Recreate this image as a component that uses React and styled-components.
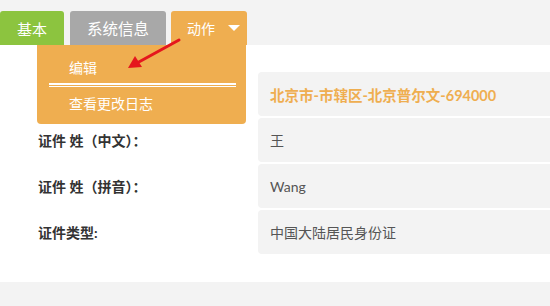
import React from 'react'
import styled, { createGlobalStyle } from 'styled-components'

const GlobalStyle = createGlobalStyle`
    html, body {
        margin: 0;
        padding: 0;
        background: #f3f3f3;
        font-family: "Lato", "Noto Sans CJK SC", sans-serif;
    }
`

const rows = [
    { label: '', value: '北京市-市辖区-北京普尔文-694000', highlight: true },
    { label: '证件 姓（中文）：', value: '王' },
    { label: '证件 姓（拼音）：', value: 'Wang' },
    { label: '证件类型:', value: '中国大陆居民身份证' },
]

const App = () => {
    return (
        <Page>
            <GlobalStyle />
            <TabBar>
                <Tab color="#8cc43f" pad="17px">基本</Tab>
                <Tab color="#a8a8a8" pad="17px" size="15.5px">系统信息</Tab>
                <ActionTab>
                    <span>动作</span>
                    <Caret />
                    <Dropdown>
                        <MenuItem>编辑</MenuItem>
                        <Divider />
                        <MenuItem>查看更改日志</MenuItem>
                    </Dropdown>
                </ActionTab>
            </TabBar>
            <Panel>
                {rows.map((row, i) => (
                    <Row key={i}>
                        <Label>{row.label}</Label>
                        <Value highlight={row.highlight}>{row.value}</Value>
                    </Row>
                ))}
            </Panel>
            <Arrow viewBox="0 0 60 34" width="60" height="34">
                <line x1="54" y1="3" x2="12" y2="26" stroke="#e5161d" strokeWidth="3" strokeLinecap="round" />
                <polygon points="3,31 10,19 17,30" fill="#e5161d" />
            </Arrow>
        </Page>
    )
}

export default App

const Page = styled.div`
    position: relative;
    width: 550px;
    height: 306px;
    overflow: hidden;
    background: #f3f3f3;
`

const TabBar = styled.nav`
    display: flex;
    align-items: flex-end;
    gap: 6px;
    height: 45px;
    box-sizing: border-box;
    padding-top: 11px;
`

const Tab = styled.div`
    height: 34px;
    display: flex;
    align-items: center;
    padding: 0 ${p => p.pad || '17px'};
    background: ${p => p.color};
    color: #fff;
    font-size: ${p => p.size || '15px'};
    border-radius: 3px 3px 0 0;
`

const ActionTab = styled.div`
    position: relative;
    height: 34px;
    display: flex;
    align-items: center;
    margin-left: -1px;
    padding: 0 7px 0 16px;
    gap: 13px;
    background: #efae50;
    color: #fff;
    font-size: 14px;
    border-radius: 3px 3px 0 0;
`

const Caret = styled.i`
    width: 0;
    height: 0;
    border-left: 6px solid transparent;
    border-right: 6px solid transparent;
    border-top: 6px solid #fff;
`

const Dropdown = styled.div`
    position: absolute;
    top: 100%;
    right: 1px;
    z-index: 2;
    width: 209px;
    box-sizing: border-box;
    padding: 6px 0 5px;
    background: #efae50;
    border-radius: 0 0 4px 4px;
`

const MenuItem = styled.div`
    height: 32px;
    display: flex;
    align-items: center;
    padding-left: 32px;
    color: #fff;
    font-size: 14px;
`

const Divider = styled.div`
    height: 1px;
    margin: 0 10px 0 12px;
    border-top: 2px solid #fff;
    border-bottom: 1px solid #fff;
`

const Panel = styled.section`
    background: #fff;
    height: 237px;
    box-sizing: border-box;
    padding: 27px 0 0 38px;
    display: flex;
    flex-direction: column;
    gap: 2px;
`

const Row = styled.div`
    display: grid;
    grid-template-columns: 220px 1fr;
    height: 44px;
`

const Label = styled.div`
    display: flex;
    align-items: center;
    color: #333;
    font-size: 14px;
    font-weight: bold;
`

const Value = styled.div`
    display: flex;
    align-items: center;
    padding-left: 12px;
    background: #f3f3f3;
    border-radius: 4px 0 0 4px;
    color: ${p => (p.highlight ? '#efae50' : '#555')};
    font-weight: ${p => (p.highlight ? 'bold' : 'normal')};
    font-size: ${p => (p.highlight ? '14.5px' : '14px')};
`

const Arrow = styled.svg`
    position: absolute;
    left: 125px;
    top: 37px;
    z-index: 3;
`
